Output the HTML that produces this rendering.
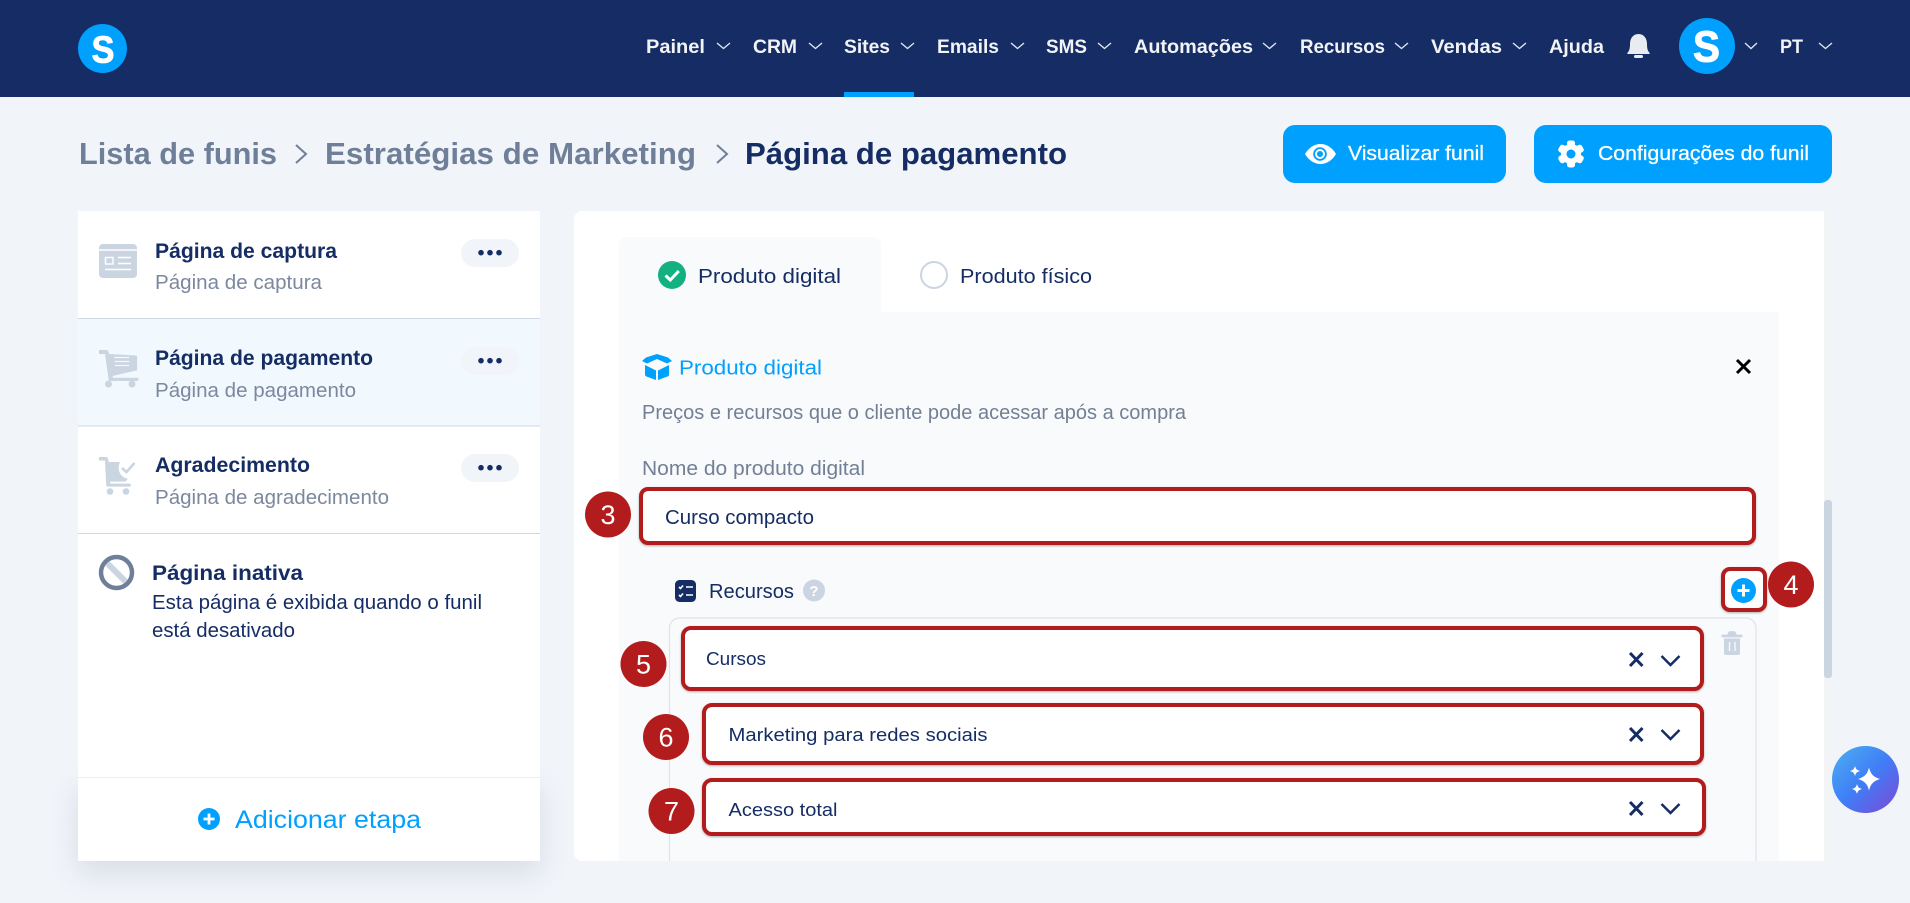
<!DOCTYPE html>
<html lang="pt">
<head>
<meta charset="utf-8">
<title>Página de pagamento</title>
<style>
html,body{margin:0;padding:0;width:1910px;height:903px;overflow:hidden;background:#f1f4f9}
svg{display:block}
text{font-family:"Liberation Sans",sans-serif}
.nav{font-size:19.500px;font-weight:700;fill:#f1f3f6}
.chev{fill:none;stroke:#dfe4ec;stroke-width:1.400}
.bc{font-size:31px;font-weight:700;fill:#6f7f99}
.t{font-size:21px;font-weight:700;fill:#152d64}
.s{font-size:20.500px;fill:#7b889e}
.d{font-size:20px;fill:#152d64}
.g{font-size:20px;fill:#727f95}
.red{fill:#fff;stroke:#b31c1c;stroke-width:4;filter:drop-shadow(0 1px 1px rgba(0,0,0,.3))}
.num{font-size:27px;fill:#fff;text-anchor:middle}
.x{fill:none;stroke:#152d64;stroke-width:3}
.ic{fill:#cbd5e1}
</style>
</head>
<body>
<svg width="1910" height="903" viewBox="0 0 1910 903" xmlns="http://www.w3.org/2000/svg">
<rect width="1910" height="903" fill="#f1f4f9"/>

<!-- Top nav -->
<rect width="1910" height="97" fill="#152d64"/>
<rect x="844" y="92" width="70" height="5" fill="#00a0ff"/>
<circle cx="102.500" cy="48.500" r="24.500" fill="#00a0ff"/>
<text x="91.500" y="62.500" font-size="38" font-weight="700" fill="#fff" stroke="#fff" stroke-width=".8" textLength="23" lengthAdjust="spacingAndGlyphs">S</text>

<text class="nav" x="646" y="53" textLength="59" lengthAdjust="spacingAndGlyphs">Painel</text>
<path class="chev" d="M717 43l6.500 5.500 6.500-5.500"/>
<text class="nav" x="753" y="53" textLength="44" lengthAdjust="spacingAndGlyphs">CRM</text>
<path class="chev" d="M809 43l6.500 5.500 6.500-5.500"/>
<text class="nav" x="844" y="53" textLength="46" lengthAdjust="spacingAndGlyphs">Sites</text>
<path class="chev" d="M901 43l6.500 5.500 6.500-5.500"/>
<text class="nav" x="937" y="53" textLength="62" lengthAdjust="spacingAndGlyphs">Emails</text>
<path class="chev" d="M1011 43l6.500 5.500 6.500-5.500"/>
<text class="nav" x="1046" y="53" textLength="41" lengthAdjust="spacingAndGlyphs">SMS</text>
<path class="chev" d="M1098 43l6.500 5.500 6.500-5.500"/>
<text class="nav" x="1134" y="53" textLength="119" lengthAdjust="spacingAndGlyphs">Automações</text>
<path class="chev" d="M1263 43l6.500 5.500 6.500-5.500"/>
<text class="nav" x="1300" y="53" textLength="85" lengthAdjust="spacingAndGlyphs">Recursos</text>
<path class="chev" d="M1395 43l6.500 5.500 6.500-5.500"/>
<text class="nav" x="1431" y="53" textLength="71" lengthAdjust="spacingAndGlyphs">Vendas</text>
<path class="chev" d="M1513 43l6.500 5.500 6.500-5.500"/>
<text class="nav" x="1549" y="53" textLength="55" lengthAdjust="spacingAndGlyphs">Ajuda</text>
<path d="M1638.500 34c-5.500 0-8.500 4.500-8.500 10 0 4.500-.7 6.800-2.500 8.800-.5.600-.2 1.200.5 1.200h21c.7 0 1-.6.500-1.200-1.800-2-2.500-4.300-2.500-8.800 0-5.500-3-10-8.500-10z" fill="#e8ecf0"/>
<rect x="1634" y="55" width="9" height="3" rx="1.500" fill="#e8ecf0"/>
<circle cx="1707" cy="46" r="28" fill="#00a0ff"/>
<text x="1693" y="61.500" font-size="44" font-weight="700" fill="#fff" stroke="#fff" stroke-width="1" textLength="27" lengthAdjust="spacingAndGlyphs">S</text>
<path class="chev" d="M1745 43l6 5.500 6-5.500"/>
<text class="nav" x="1780" y="53" textLength="23" lengthAdjust="spacingAndGlyphs">PT</text>
<path class="chev" d="M1819 43l6.500 5.500 6.500-5.500"/>

<!-- Breadcrumb -->
<text class="bc" x="79" y="164" textLength="198" lengthAdjust="spacingAndGlyphs">Lista de funis</text>
<path d="M296 145l10 9-10 9" fill="none" stroke="#6f7f99" stroke-width="2"/>
<text class="bc" x="325" y="164" textLength="371" lengthAdjust="spacingAndGlyphs">Estratégias de Marketing</text>
<path d="M717 145l10 9-10 9" fill="none" stroke="#6f7f99" stroke-width="2"/>
<text class="bc" style="fill:#152d64" x="745" y="164" textLength="322" lengthAdjust="spacingAndGlyphs">Página de pagamento</text>

<!-- Buttons -->
<rect x="1283" y="125" width="223" height="58" rx="12" fill="#00a0ff"/>
<path d="M1305 154c3.500-6 9-10 15.500-10s12 4 15.500 10c-3.500 6-9 10-15.500 10s-12-4-15.500-10z" fill="#fff"/>
<circle cx="1320" cy="154" r="6.800" fill="#00a0ff"/>
<circle cx="1320" cy="154" r="5" fill="#fff"/>
<circle cx="1320" cy="154" r="3" fill="#00a0ff"/>
<text x="1348" y="160" font-size="20.500" fill="#fff" stroke="#fff" stroke-width=".3" textLength="136" lengthAdjust="spacingAndGlyphs">Visualizar funil</text>
<rect x="1534" y="125" width="298" height="58" rx="12" fill="#00a0ff"/>
<g fill="#fff">
<circle cx="1571" cy="154" r="10"/>
<rect x="1567" y="140.500" width="8" height="27" rx="2.500"/>
<rect x="1567" y="140.500" width="8" height="27" rx="2.500" transform="rotate(60 1571 154)"/>
<rect x="1567" y="140.500" width="8" height="27" rx="2.500" transform="rotate(120 1571 154)"/>
</g>
<circle cx="1571" cy="154" r="4.500" fill="#00a0ff"/>
<text x="1598" y="160" font-size="20.500" fill="#fff" stroke="#fff" stroke-width=".3" textLength="211" lengthAdjust="spacingAndGlyphs">Configurações do funil</text>

<!-- Sidebar -->
<rect x="78" y="777" width="462" height="84" fill="#fff" style="filter:drop-shadow(0 12px 14px rgba(40,55,90,.12))"/>
<rect x="78" y="211" width="462" height="566" fill="#fff"/>
<rect x="78" y="319" width="462" height="107" fill="#f1f9ff"/>
<rect x="78" y="318" width="462" height="1" fill="#cfd7e3"/>
<rect x="78" y="425.500" width="462" height="1" fill="#cfd7e3"/>
<rect x="78" y="533" width="462" height="1" fill="#cfd7e3"/>
<rect x="78" y="777" width="462" height="1" fill="#eceef1"/>

<!-- item 1 -->
<rect x="99" y="244" width="38" height="34" rx="4" class="ic"/>
<g stroke="#fff" stroke-width="1.400" fill="none">
<path d="M99 250h38"/>
<rect x="105.500" y="257.500" width="7.500" height="6.500"/>
<path d="M118 257.500h13M118 263.500h13M105 269.500h26"/>
</g>
<text class="t" x="155" y="258" textLength="182" lengthAdjust="spacingAndGlyphs">Página de captura</text>
<text class="s" x="155" y="289" textLength="167" lengthAdjust="spacingAndGlyphs">Página de captura</text>
<rect x="461" y="239" width="58" height="28" rx="14" fill="#f1f4f9"/>
<g fill="#152d64"><circle cx="481" cy="252.700" r="2.800"/><circle cx="490" cy="252.700" r="2.800"/><circle cx="499" cy="252.700" r="2.800"/></g>

<!-- item 2 -->
<path d="M99 350h7.500c1 0 1.800.7 2 1.600l.6 2.400 27 1.500c.6 0 1 .5 1 1v13c0 .5-.3.9-.8 1l-23.800 5.500.5 1.800h24c1 0 1.500.8 1.500 1.700s-.6 1.500-1.500 1.500h-26.500c-1 0-1.700-.6-1.900-1.500L105 354h-6z" class="ic"/>
<circle cx="108.500" cy="384" r="3.500" class="ic"/><circle cx="132" cy="384" r="3.500" class="ic"/>
<path d="M114 357.500h15M114.500 361.500h15M115 365.500h14" stroke="#f1f9ff" stroke-width="1.300" fill="none"/>
<text class="t" x="155" y="365" textLength="218" lengthAdjust="spacingAndGlyphs">Página de pagamento</text>
<text class="s" x="155" y="397" textLength="201" lengthAdjust="spacingAndGlyphs">Página de pagamento</text>
<rect x="461" y="347" width="58" height="28" rx="14" fill="#f1f4f9"/>
<g fill="#152d64"><circle cx="481" cy="360.700" r="2.800"/><circle cx="490" cy="360.700" r="2.800"/><circle cx="499" cy="360.700" r="2.800"/></g>

<!-- item 3 -->
<path d="M99 457h7c1 0 1.800.7 2 1.600l.7 3.400h11.300c-.8 2-1.300 3.500-1.300 6 0 5.500 4 10 9.300 10.800l-2 2.200c-.4.400-1 .6-1.500.6h-14.500l.5 2h19c1 0 1.500.7 1.500 1.500s-.6 1.500-1.500 1.500h-21.500c-1 0-1.600-.6-1.800-1.500L105 460.500h-6z" class="ic"/>
<circle cx="110" cy="491.500" r="3.300" class="ic"/><circle cx="126" cy="491.500" r="3.300" class="ic"/>
<path d="M122 468l4.500 4 8-9" fill="none" stroke="#cbd5e1" stroke-width="2.600"/>
<text class="t" x="155" y="472" textLength="155" lengthAdjust="spacingAndGlyphs">Agradecimento</text>
<text class="s" x="155" y="504" textLength="234" lengthAdjust="spacingAndGlyphs">Página de agradecimento</text>
<rect x="461" y="454" width="58" height="28" rx="14" fill="#f1f4f9"/>
<g fill="#152d64"><circle cx="481" cy="467.700" r="2.800"/><circle cx="490" cy="467.700" r="2.800"/><circle cx="499" cy="467.700" r="2.800"/></g>

<!-- inactive -->
<path d="M105 561l23 23" stroke="#cbd5e1" stroke-width="6"/>
<circle cx="116.500" cy="572.500" r="15.500" fill="none" stroke="#6f7f99" stroke-width="4.500"/>
<text class="t" x="152" y="580" textLength="151" lengthAdjust="spacingAndGlyphs">Página inativa</text>
<text class="d" x="152" y="609" textLength="330" lengthAdjust="spacingAndGlyphs">Esta página é exibida quando o funil</text>
<text class="d" x="152" y="637" textLength="143" lengthAdjust="spacingAndGlyphs">está desativado</text>

<!-- add step -->
<circle cx="209" cy="819" r="11" fill="#00a0ff"/>
<path d="M203.500 819h11M209 813.500v11" stroke="#fff" stroke-width="2.800"/>
<text x="235" y="828" font-size="25" fill="#00a0ff" textLength="186" lengthAdjust="spacingAndGlyphs">Adicionar etapa</text>

<!-- Main panel -->
<path d="M582 211H1824V861H582a8 8 0 0 1-8-8V219a8 8 0 0 1 8-8z" fill="#fff"/>
<rect x="1824" y="211" width="8" height="650" rx="3" fill="#f3f4f5"/>
<rect x="1824" y="500" width="8" height="178" rx="3" fill="#cbd5e1"/>
<path d="M619 861V245a8 8 0 0 1 8-8H873a8 8 0 0 1 8 8v67H1779V861z" fill="#f8fafc"/>

<circle cx="672" cy="275" r="14" fill="#13b080"/>
<path d="M665.500 275.500l4.800 4.500 8.500-9" fill="none" stroke="#fff" stroke-width="3"/>
<text class="d" style="font-size:20.500px" x="698" y="283" textLength="143" lengthAdjust="spacingAndGlyphs">Produto digital</text>
<circle cx="934" cy="275" r="13" fill="#fff" stroke="#cbd5e1" stroke-width="2"/>
<text class="d" style="font-size:20.500px" x="960" y="283" textLength="132" lengthAdjust="spacingAndGlyphs">Produto físico</text>

<g fill="#00a0ff">
<path d="M657 354l11 3.500 4 3.500-5 2.500-10-4.500-10 4.500-5-2.500 4-3.500z"/>
<path d="M645 365l11 5.500v9.500l-9.500-3.500c-1-.4-1.500-1-1.500-2z"/>
<path d="M669 365l-11 5.500v9.500l9.500-3.500c1-.4 1.500-1 1.500-2z"/>
</g>
<text x="679" y="374.500" font-size="20.500" fill="#00a0ff" textLength="143" lengthAdjust="spacingAndGlyphs">Produto digital</text>
<path d="M1737 360l13 13M1750 360l-13 13" stroke="#000" stroke-width="3" fill="none"/>

<text class="g" x="642" y="419" textLength="544" lengthAdjust="spacingAndGlyphs">Preços e recursos que o cliente pode acessar após a compra</text>
<text class="g" x="642" y="475" textLength="223" lengthAdjust="spacingAndGlyphs">Nome do produto digital</text>

<rect class="red" x="641" y="489" width="1113" height="54" rx="7"/>
<text class="d" x="665" y="524" textLength="149" lengthAdjust="spacingAndGlyphs">Curso compacto</text>
<circle cx="608" cy="514.500" r="23" fill="#b31c1c"/>
<text class="num" x="608" y="524">3</text>

<!-- Recursos -->
<rect x="675" y="580" width="21" height="22" rx="4.500" fill="#152d64"/>
<path d="M679 587l1.500 1.500 2.500-3M686 587h7M679 595l1.500 1.500 2.500-3M686 595h7" fill="none" stroke="#fff" stroke-width="1.600"/>
<text class="d" x="709" y="598" textLength="85" lengthAdjust="spacingAndGlyphs">Recursos</text>
<circle cx="814" cy="590.500" r="11" fill="#cbd5e1"/>
<text x="814" y="596" font-size="15" font-weight="700" fill="#fff" text-anchor="middle">?</text>

<rect class="red" x="1723" y="569" width="42" height="41" rx="7" stroke-width="3"/>
<circle cx="1743.500" cy="590.500" r="12.500" fill="#00a0ff"/>
<path d="M1737.500 590.500h12M1743.500 584.500v12" stroke="#fff" stroke-width="3"/>
<circle cx="1791" cy="584.500" r="23" fill="#b31c1c"/>
<text class="num" x="1791" y="594">4</text>

<path d="M669.500 861V628a10 10 0 0 1 10-10H1746a10 10 0 0 1 10 10V861" fill="none" stroke="#dfe3e8" stroke-width="1.200"/>
<path d="M1722 635h20v2h-20zM1728 635c0-2.500 1-3.500 2.500-3.500h3c1.500 0 2.500 1 2.500 3.500" class="ic" stroke="#cbd5e1" stroke-width=".8" fill-opacity="1"/>
<path d="M1724 638.500h16V653c0 1-.8 2-2 2h-12c-1.200 0-2-1-2-2z" class="ic"/>
<path d="M1729.500 642v9M1735 642v9" stroke="#f8fafc" stroke-width="1.300"/>

<!-- Row 5 -->
<rect class="red" x="683" y="628" width="1019" height="61" rx="8"/>
<text class="d" style="font-size:18.500px" x="706" y="665" textLength="60" lengthAdjust="spacingAndGlyphs">Cursos</text>
<path class="x" d="M1630 653l12.500 13M1642.500 653l-12.500 13"/>
<path d="M1661.500 656l9 9 9-9" fill="none" stroke="#152d64" stroke-width="2.500"/>
<circle cx="643.500" cy="664" r="23" fill="#b31c1c"/>
<text class="num" x="643.500" y="673.500">5</text>

<!-- Row 6 -->
<rect class="red" x="704" y="705" width="998" height="58" rx="8"/>
<text class="d" style="font-size:18.500px" x="728.500" y="741" textLength="259" lengthAdjust="spacingAndGlyphs">Marketing para redes sociais</text>
<path class="x" d="M1630 728l12.500 13M1642.500 728l-12.500 13"/>
<path d="M1661.500 730l9 9 9-9" fill="none" stroke="#152d64" stroke-width="2.500"/>
<circle cx="666" cy="737" r="23" fill="#b31c1c"/>
<text class="num" x="666" y="746.500">6</text>

<!-- Row 7 -->
<rect class="red" x="704" y="780" width="1000" height="54" rx="8"/>
<text class="d" style="font-size:18.500px" x="728.500" y="816" textLength="109" lengthAdjust="spacingAndGlyphs">Acesso total</text>
<path class="x" d="M1630 802l12.500 13M1642.500 802l-12.500 13"/>
<path d="M1661.500 804l9 9 9-9" fill="none" stroke="#152d64" stroke-width="2.500"/>
<circle cx="671.500" cy="811" r="23" fill="#b31c1c"/>
<text class="num" x="671.500" y="820.500">7</text>

<!-- AI bubble -->
<defs>
<linearGradient id="ai" x1="0.100" y1="0.100" x2="0.900" y2="0.900">
<stop offset="0" stop-color="#4aa6f2"/>
<stop offset=".5" stop-color="#3f7ef7"/>
<stop offset="1" stop-color="#7252dc"/>
</linearGradient>
</defs>
<circle cx="1865.500" cy="779.500" r="33.500" fill="url(#ai)"/>
<g fill="#fff">
<path d="M1869 767.500c1.500 6.500 4.500 9.500 11 11.500-6.500 2-9.500 5-11 11.500-1.500-6.500-4.500-9.500-11-11.500 6.500-2 9.500-5 11-11.500z"/>
<path d="M1855 766c.8 3 2 4.200 5 5-3 .8-4.200 2-5 5-.8-3-2-4.200-5-5 3-.8 4.200-2 5-5z"/>
<path d="M1857 784c.8 3 2 4.200 5 5-3 .8-4.200 2-5 5-.8-3-2-4.200-5-5 3-.8 4.200-2 5-5z"/>
</g>
</svg>
</body>
</html>
